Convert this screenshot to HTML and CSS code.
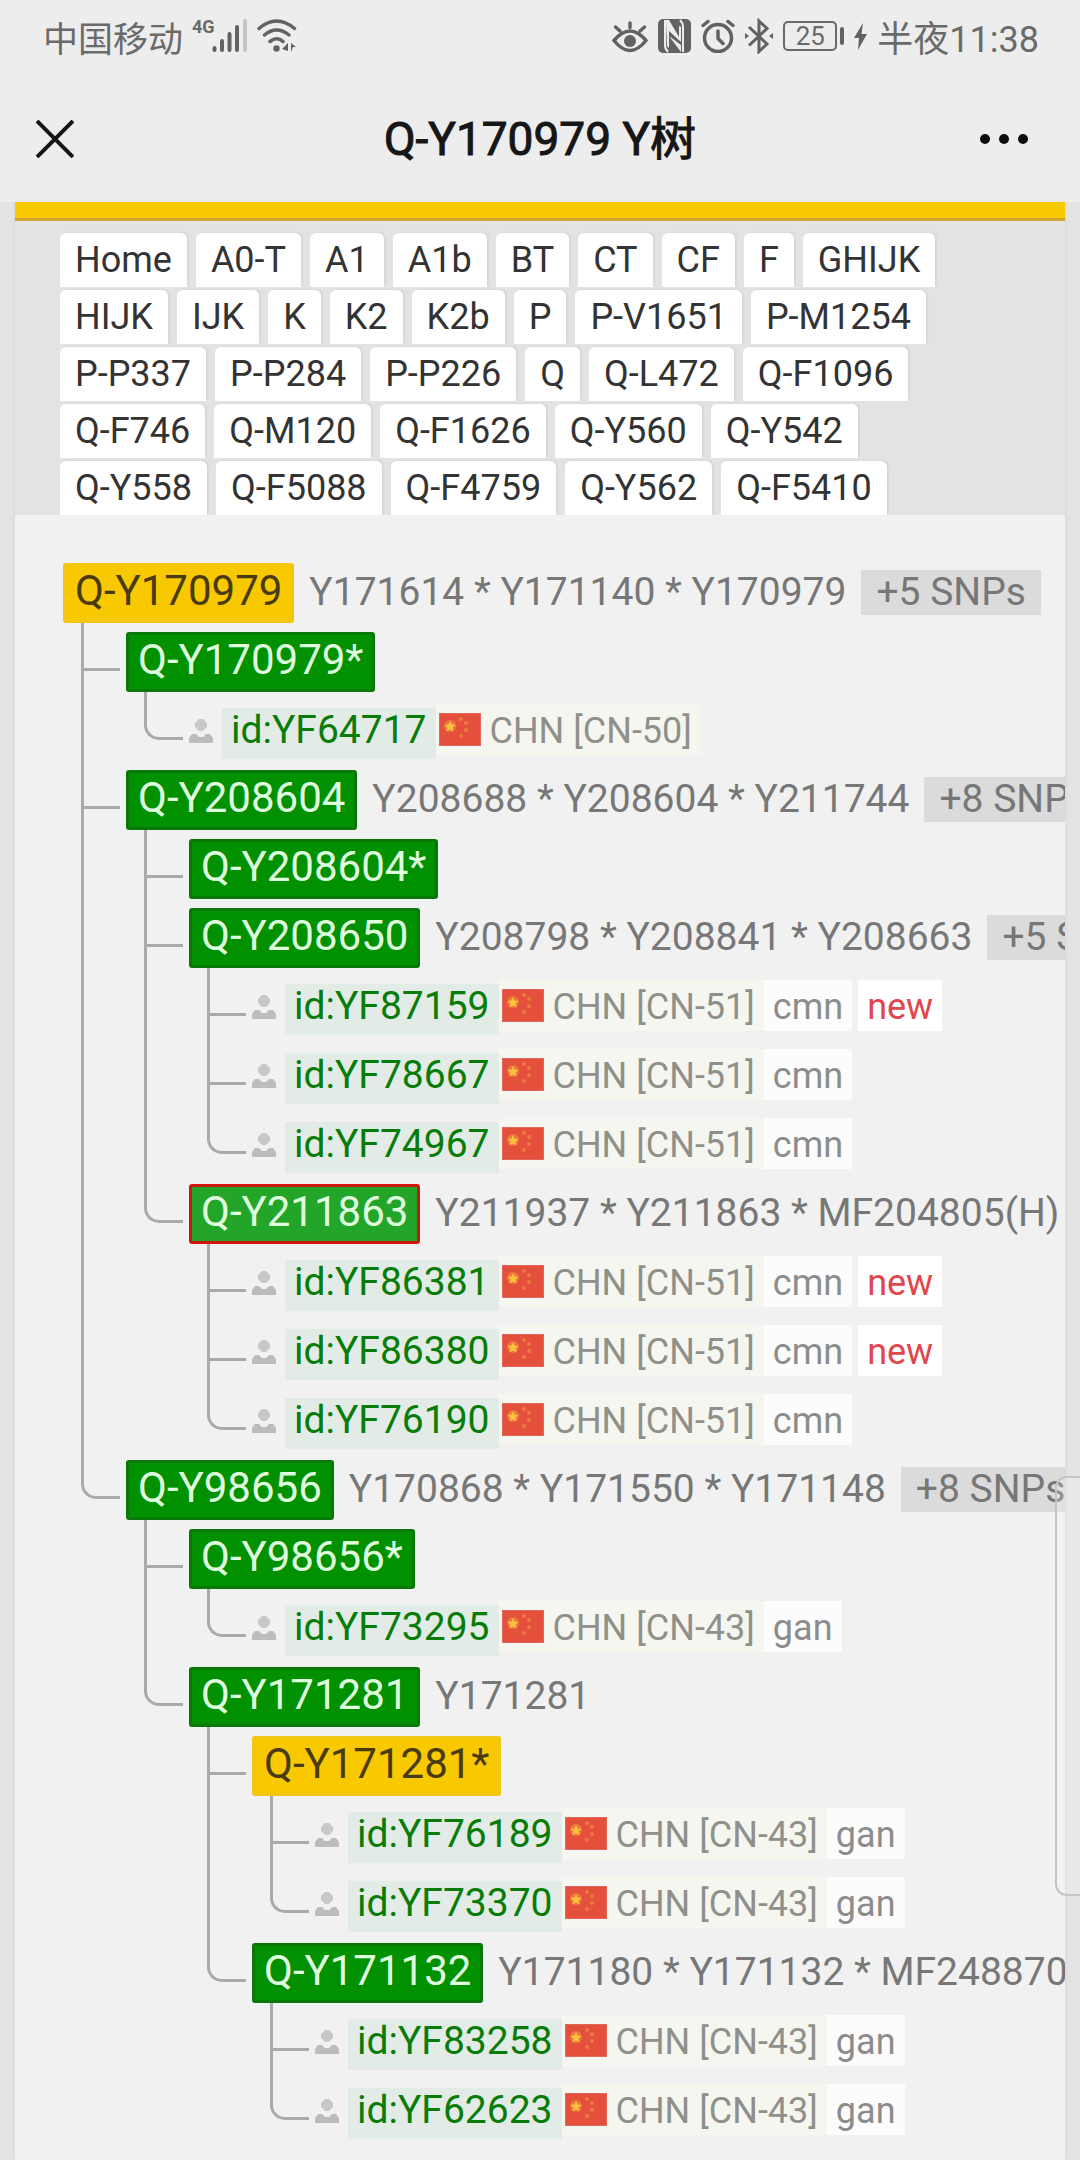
FILE: index.html
```html
<!DOCTYPE html>
<html lang="zh-CN">
<head>
    <meta charset="UTF-8">
    <meta name="viewport" content="width=device-width">
    <title>Q-Y170979 Y树</title>
    <link rel="stylesheet" href="styles.css">
</head>
<body>
    <!-- shared icons -->
    <svg class="sprite" width="0" height="0">
        <symbol id="flag-cn" viewBox="0 0 42 33">
            <rect width="42" height="33" fill="#e0685a"/>
            <rect x="1" y="1" width="40" height="31" fill="#e5503c"/>
            <circle cx="11" cy="13" r="6" fill="#ec7a3c"/>
            <path d="M11 8l1.500 3.500 4 .5-3 2.500 1 4-3.500-2-3.500 2 1-4-3-2.500 4-.5z" fill="#fbc23c"/>
            <g fill="#ea7a3e">
                <circle cx="22" cy="6" r="2"/>
                <circle cx="27" cy="10" r="2"/>
                <circle cx="27" cy="17" r="2"/>
                <circle cx="22" cy="23" r="2"/>
            </g>
        </symbol>
        <symbol id="person" viewBox="0 0 24 24">
            <path d="M10 0h4l4 4v4l-4 4h-4L6 8V4z" fill="#c8c8c8"/>
            <path d="M0 24v-5l3-4h4l3 3h4l3-3h4l3 4v5z" fill="#bcbcbc"/>
        </symbol>
    </svg>

    <header class="topbar">
        <div class="status">
            <div class="status-left">
                <span class="carrier">中国移动</span>
                <span class="net">4G</span>
                <svg class="signal" width="36" height="34" viewBox="0 0 36 34" stroke="#626262" stroke-width="4" stroke-linecap="round">
                    <path d="M2.500 31v-2M10 31v-9M17.500 31V15M25 31V8"/>
                    <path d="M33 31V2" stroke="#c4c4c4"/>
                </svg>
                <svg width="40" height="34" viewBox="0 0 40 34" fill="none" stroke="#626262" stroke-width="3.500" stroke-linecap="round">
                    <path d="M2 9.500q17.500-15 35.500 0M7.500 16q12-10 24.500 0M13 22.500q7-5.500 13 0"/>
                    <circle cx="19.500" cy="29.500" r="3.200" fill="#626262" stroke="none"/>
                    <path d="M25 30l6-6v8zM39 28h-3l-2 5v-9z" fill="#626262" stroke="none"/>
                </svg>
            </div>
            <div class="status-right">
                <svg width="36" height="34" viewBox="0 0 36 34" fill="none" stroke="#626262" stroke-width="3.500" stroke-linecap="round">
                    <path d="M2 21.500q16-19 32 0-16 20-32 0z"/>
                    <circle cx="18" cy="22" r="6" fill="#626262" stroke="none"/>
                    <path d="M18 8.500V4M8 12L3.500 8M28 12l4.500-4"/>
                </svg>
                <svg width="33" height="34" viewBox="0 0 33 34">
                    <rect width="33" height="34" rx="5" fill="#626262"/>
                    <path d="M7 1v25q0 4 3 7M25 33V8q0-4-3-7" fill="none" stroke="#ededed" stroke-width="2"/>
                    <path d="M8 1h3l10 17V7l2 1v15L11 12v17l-2-2z" fill="#ededed"/>
                    <path d="M11 17l12 9v7z" fill="#ededed"/>
                </svg>
                <svg width="34" height="34" viewBox="0 0 34 34" fill="none" stroke="#626262" stroke-width="3.500" stroke-linecap="round">
                    <circle cx="17" cy="19" r="13.500"/>
                    <path d="M17 12v7.500l5 5M2 6.500L7 2.500M32 6.500l-5-4"/>
                </svg>
                <svg width="28" height="36" viewBox="0 0 28 36" fill="none" stroke="#626262" stroke-width="3">
                    <path d="M4 9l18 17-8 7.500V3l8 7.500L4 27.500"/>
                    <path d="M0 15l4 3-4 3zM28 15l-4 3 4 3z" fill="#626262" stroke="none"/>
                </svg>
                <div class="battery"><span class="battery-level">25</span></div>
                <svg width="13" height="27" viewBox="0 0 13 27">
                    <path d="M9 0L0 15h5L4 27l9-16H7.500z" fill="#626262"/>
                </svg>
                <span class="time">半夜11:38</span>
            </div>
        </div>
        <div class="titlebar">
            <button class="icon-btn close" type="button" aria-label="关闭">
                <svg width="38" height="38" viewBox="0 0 38 38" stroke="#161616" stroke-width="4">
                    <path d="M1 1l36 36M37 1L1 37"/>
                </svg>
            </button>
            <h1 class="title">Q-Y170979 Y树</h1>
            <button class="icon-btn" type="button" aria-label="更多">
                <svg width="48" height="12" viewBox="0 0 48 12" fill="#0c0c0c">
                    <circle cx="5" cy="6" r="5"/>
                    <circle cx="24" cy="6" r="5"/>
                    <circle cx="43" cy="6" r="5"/>
                </svg>
            </button>
        </div>
    </header>

    <div class="page">
        <nav class="crumbs">
            <a href="#">Home</a>
            <a href="#">A0-T</a>
            <a href="#">A1</a>
            <a href="#">A1b</a>
            <a href="#">BT</a>
            <a href="#">CT</a>
            <a href="#">CF</a>
            <a href="#">F</a>
            <a href="#">GHIJK</a>
            <a href="#">HIJK</a>
            <a href="#">IJK</a>
            <a href="#">K</a>
            <a href="#">K2</a>
            <a href="#">K2b</a>
            <a href="#">P</a>
            <a href="#">P-V1651</a>
            <a href="#">P-M1254</a>
            <a href="#">P-P337</a>
            <a href="#">P-P284</a>
            <a href="#">P-P226</a>
            <a href="#">Q</a>
            <a href="#">Q-L472</a>
            <a href="#">Q-F1096</a>
            <a href="#">Q-F746</a>
            <a href="#">Q-M120</a>
            <a href="#">Q-F1626</a>
            <a href="#">Q-Y560</a>
            <a href="#">Q-Y542</a>
            <a href="#">Q-Y558</a>
            <a href="#">Q-F5088</a>
            <a href="#">Q-F4759</a>
            <a href="#">Q-Y562</a>
            <a href="#">Q-F5410</a>
        </nav>

        <main class="tree">
            <div class="row"><a class="hg yellow" href="#">Q-Y170979</a><span class="snps">Y171614 * Y171140 * Y170979</span><span class="more">+5 SNPs</span></div>
            <ul>
                <li><div class="node">
                    <div class="row"><a class="hg" href="#">Q-Y170979*</a></div>
                    <ul>
                        <li><div class="leaf"><svg class="person"><use href="#person"/></svg><a class="sample" href="#">id:YF64717</a><span class="geo"><svg class="flag"><use href="#flag-cn"/></svg>CHN [CN-50]</span></div></li>
                    </ul>
                </div></li>
                <li><div class="node">
                    <div class="row"><a class="hg" href="#">Q-Y208604</a><span class="snps">Y208688 * Y208604 * Y211744</span><span class="more">+8 SNPs</span></div>
                    <ul>
                        <li><div class="node">
                            <div class="row"><a class="hg" href="#">Q-Y208604*</a></div>
                        </div></li>
                        <li><div class="node">
                            <div class="row"><a class="hg" href="#">Q-Y208650</a><span class="snps">Y208798 * Y208841 * Y208663</span><span class="more">+5 SNPs</span></div>
                            <ul>
                                <li><div class="leaf"><svg class="person"><use href="#person"/></svg><a class="sample" href="#">id:YF87159</a><span class="geo"><svg class="flag"><use href="#flag-cn"/></svg>CHN [CN-51]</span><span class="lang">cmn</span><span class="new">new</span></div></li>
                                <li><div class="leaf"><svg class="person"><use href="#person"/></svg><a class="sample" href="#">id:YF78667</a><span class="geo"><svg class="flag"><use href="#flag-cn"/></svg>CHN [CN-51]</span><span class="lang">cmn</span></div></li>
                                <li><div class="leaf"><svg class="person"><use href="#person"/></svg><a class="sample" href="#">id:YF74967</a><span class="geo"><svg class="flag"><use href="#flag-cn"/></svg>CHN [CN-51]</span><span class="lang">cmn</span></div></li>
                            </ul>
                        </div></li>
                        <li><div class="node">
                            <div class="row"><a class="hg current" href="#">Q-Y211863</a><span class="snps">Y211937 * Y211863 * MF204805(H)</span></div>
                            <ul>
                                <li><div class="leaf"><svg class="person"><use href="#person"/></svg><a class="sample" href="#">id:YF86381</a><span class="geo"><svg class="flag"><use href="#flag-cn"/></svg>CHN [CN-51]</span><span class="lang">cmn</span><span class="new">new</span></div></li>
                                <li><div class="leaf"><svg class="person"><use href="#person"/></svg><a class="sample" href="#">id:YF86380</a><span class="geo"><svg class="flag"><use href="#flag-cn"/></svg>CHN [CN-51]</span><span class="lang">cmn</span><span class="new">new</span></div></li>
                                <li><div class="leaf"><svg class="person"><use href="#person"/></svg><a class="sample" href="#">id:YF76190</a><span class="geo"><svg class="flag"><use href="#flag-cn"/></svg>CHN [CN-51]</span><span class="lang">cmn</span></div></li>
                            </ul>
                        </div></li>
                    </ul>
                </div></li>
                <li><div class="node">
                    <div class="row"><a class="hg" href="#">Q-Y98656</a><span class="snps">Y170868 * Y171550 * Y171148</span><span class="more">+8 SNPs</span></div>
                    <ul>
                        <li><div class="node">
                            <div class="row"><a class="hg" href="#">Q-Y98656*</a></div>
                            <ul>
                                <li><div class="leaf"><svg class="person"><use href="#person"/></svg><a class="sample" href="#">id:YF73295</a><span class="geo"><svg class="flag"><use href="#flag-cn"/></svg>CHN [CN-43]</span><span class="lang">gan</span></div></li>
                            </ul>
                        </div></li>
                        <li><div class="node">
                            <div class="row"><a class="hg" href="#">Q-Y171281</a><span class="snps">Y171281</span></div>
                            <ul>
                                <li><div class="node">
                                    <div class="row"><a class="hg yellow" href="#">Q-Y171281*</a></div>
                                    <ul>
                                        <li><div class="leaf"><svg class="person"><use href="#person"/></svg><a class="sample" href="#">id:YF76189</a><span class="geo"><svg class="flag"><use href="#flag-cn"/></svg>CHN [CN-43]</span><span class="lang">gan</span></div></li>
                                        <li><div class="leaf"><svg class="person"><use href="#person"/></svg><a class="sample" href="#">id:YF73370</a><span class="geo"><svg class="flag"><use href="#flag-cn"/></svg>CHN [CN-43]</span><span class="lang">gan</span></div></li>
                                    </ul>
                                </div></li>
                                <li><div class="node">
                                    <div class="row"><a class="hg" href="#">Q-Y171132</a><span class="snps">Y171180 * Y171132 * MF248870</span></div>
                                    <ul>
                                        <li><div class="leaf"><svg class="person"><use href="#person"/></svg><a class="sample" href="#">id:YF83258</a><span class="geo"><svg class="flag"><use href="#flag-cn"/></svg>CHN [CN-43]</span><span class="lang">gan</span></div></li>
                                        <li><div class="leaf"><svg class="person"><use href="#person"/></svg><a class="sample" href="#">id:YF62623</a><span class="geo"><svg class="flag"><use href="#flag-cn"/></svg>CHN [CN-43]</span><span class="lang">gan</span></div></li>
                                    </ul>
                                </div></li>
                            </ul>
                        </div></li>
                    </ul>
                </div></li>
            </ul>
        </main>
    </div>

    <!-- edge panel handle, floats over the page -->
    <div class="edge-handle"></div>
</body>
</html>
```

FILE: styles.css
```css
*,
*::before,
*::after {
    margin: 0;
    padding: 0;
    box-sizing: border-box;
}
body {
    display: flex;
    flex-direction: column;
    min-height: 100vh;
    background: #e3e3e3;
    font-family: Roboto, "Noto Sans CJK SC", sans-serif;
    overflow-x: hidden;
}
a {
    text-decoration: none;
    color: inherit;
}
ul {
    list-style: none;
}
svg {
    flex: none;
}
.sprite {
    display: none;
}

/* status bar and title */
.topbar {
    background: #ededed;
}
.status {
    display: flex;
    justify-content: space-between;
    align-items: center;
    height: 75px;
    padding: 0 41px 3px 43px;
    color: #6a6a6a;
    font-size: 36px;
}
.status-left,
.status-right {
    display: flex;
    align-items: center;
}
.status-left {
    gap: 9px;
}
.status-right {
    gap: 10px;
}
.carrier {
    font-size: 35px;
}
.net {
    align-self: flex-start;
    margin-top: 6px;
    font-size: 18px;
    line-height: 20px;
    font-weight: 700;
}
.signal {
    margin-left: -12px;
}
.battery {
    display: flex;
    align-items: center;
}
.battery-level {
    width: 54px;
    border: 2px solid #6a6a6a;
    border-radius: 5px;
    font-size: 26px;
    line-height: 26px;
    text-align: center;
}
.battery::after {
    content: "";
    width: 4px;
    height: 18px;
    margin-left: 3px;
    border-radius: 2px;
    background: #626262;
}
.titlebar {
    display: flex;
    justify-content: space-between;
    align-items: center;
    height: 127px;
    padding: 0 36px;
}
.icon-btn {
    display: flex;
    align-items: center;
    justify-content: center;
    width: 80px;
    height: 60px;
    border: none;
    background: none;
}
.icon-btn.close {
    justify-content: flex-start;
}
.title {
    color: #161616;
    font-size: 46px;
    font-weight: 400;
    line-height: 60px;
    -webkit-text-stroke: 1px #161616;
}

/* page */
.page {
    flex: 1;
    display: flex;
    flex-direction: column;
    margin: 0 15px;
    border-top: 16px solid #f8c800;
    box-shadow: 0 0 4px rgba(0, 0, 0, .08);
}
.crumbs {
    display: flex;
    flex-wrap: wrap;
    gap: 3px 9px;
    padding: 12px 60px 0 45px;
    border-top: 3px solid #d2a52e;
}
.crumbs a {
    padding: 0 15px;
    border-radius: 6px 6px 0 0;
    background: #fff;
    box-shadow: 2px -1px 2px rgba(0, 0, 0, .05);
    color: #333;
    font-size: 36px;
    line-height: 54px;
}
.tree {
    flex: 1;
    padding: 48px 0 9px 48px;
    background: #f1f1f1;
    overflow: hidden;
    white-space: nowrap;
}

/* one line of the tree */
.row,
.leaf {
    display: flex;
    align-items: baseline;
    height: 60px;
}
.leaf {
    padding-top: 3px;
}
.hg {
    padding: 0 9px 4px;
    border: 3px solid #087808;
    border-radius: 3px;
    background: #009000;
    color: #dfffdf;
    font-size: 42px;
    line-height: 50px;
}
.hg.yellow {
    border-color: #f2c612;
    background: #f8c800;
    color: #4a3a10;
}
.hg.current {
    border-color: #d01410;
    background: #22a528;
}
.snps,
.more {
    margin-left: 15px;
    color: #777;
    font-size: 39px;
    line-height: 45px;
}
.more {
    padding: 0 15px;
    background: #dbdbdb;
}

/* connectors */
.tree ul {
    margin-left: 18px;
}
.tree li {
    display: flex;
    border-left: 3px solid #aaa;
}
.tree li::before {
    content: "";
    flex: none;
    width: 36px;
    height: 48px;
    margin-right: 6px;
    border-bottom: 3px solid #aaa;
}
.tree li:last-child {
    border-left: none;
}
.tree li:last-child::before {
    width: 39px;
    border-left: 3px solid #aaa;
    border-bottom-left-radius: 15px;
}
.node,
.leaf {
    margin-top: 9px;
}

/* samples */
.person {
    width: 24px;
    height: 24px;
    margin-right: 9px;
}
.sample {
    padding: 0 9px 6px;
    background: #e2ebe5;
    color: #087c08;
    font-size: 39px;
    line-height: 45px;
}
.geo,
.lang,
.new {
    padding: 6px 9px 3px;
    font-size: 36px;
    line-height: 42px;
}
.geo {
    padding-left: 3px;
    background: #f6f6f1;
    color: #90908a;
}
.flag {
    width: 42px;
    height: 33px;
    margin-right: 9px;
    vertical-align: -3px;
}
.lang {
    background: #fcfcfc;
    color: #8c8c8c;
}
.new {
    margin-left: 6px;
    background: #fff;
    color: #e0474c;
}

.edge-handle {
    position: absolute;
    top: 1476px;
    right: 0;
    width: 25px;
    height: 420px;
    border: 2px solid #c4c4c4;
    border-right: none;
    border-radius: 12px 0 0 12px;
    background: rgba(255, 255, 255, .2);
}
```
